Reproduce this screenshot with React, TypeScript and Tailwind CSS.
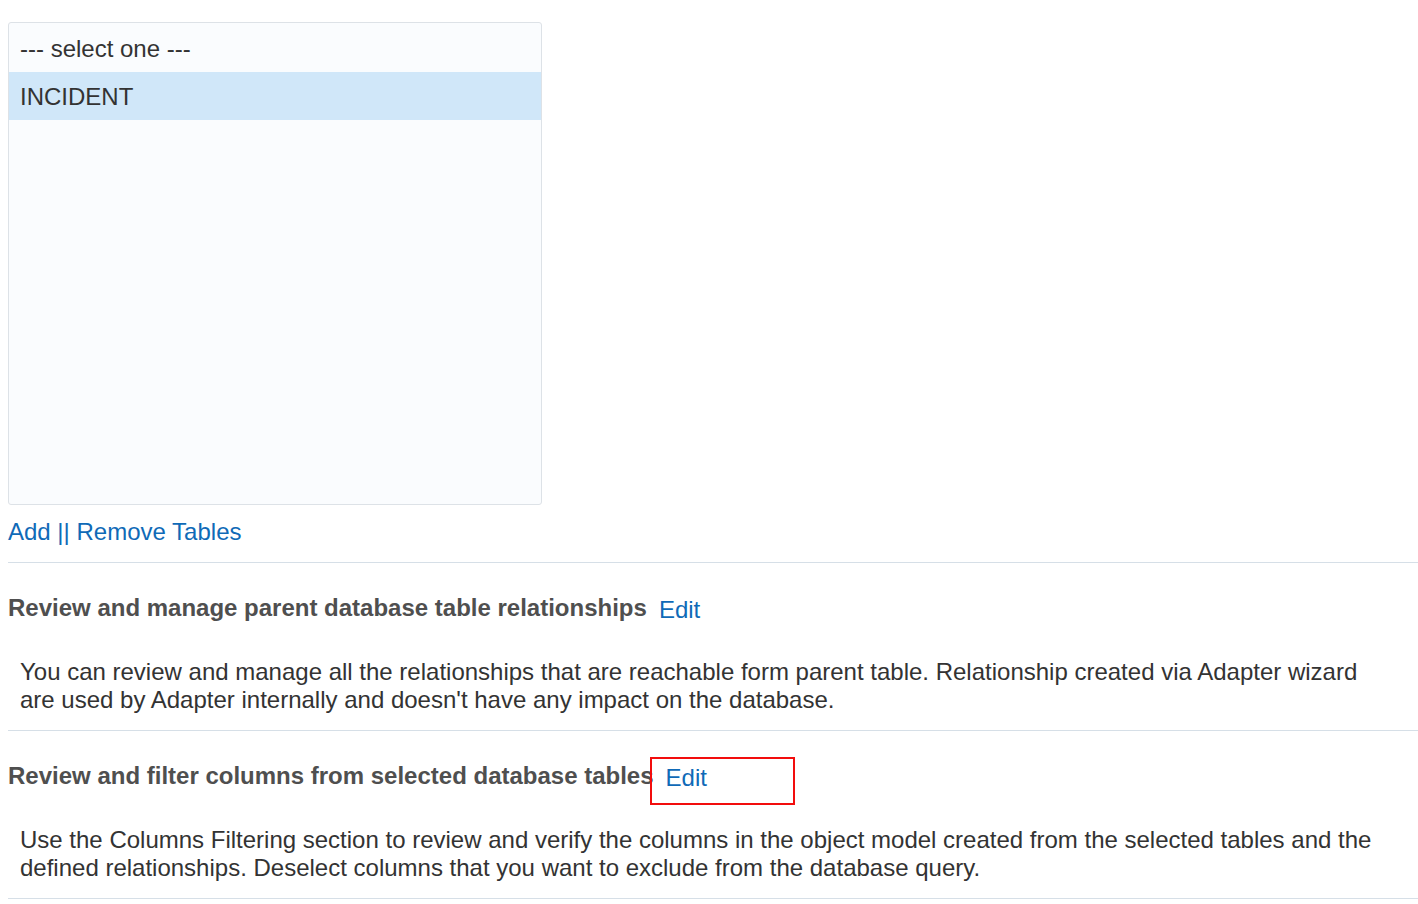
import React from 'react'

const font = { fontFamily: '"Liberation Sans", Arial, sans-serif' }

function Section({ title, children, highlight }: { title: string; children: React.ReactNode; highlight?: boolean }) {
  return (
    <div className="border-t border-[#d6dfe7]">
      <div className="mt-[31px] flex items-baseline text-[24px] leading-[28px]">
        <span className="font-bold text-[#4f4f4f]">{title}</span>
        <span className="relative top-[2px] ml-[12px] text-[24px] text-[#0f6ab7]">
          Edit
          {highlight && (
            <span className="pointer-events-none absolute left-[-16px] top-[-7px] h-[48px] w-[145px] border-2 border-[#f20d0d]" />
          )}
        </span>
      </div>
      <p className="mt-[36px] mb-[16px] pl-[12px] pr-[24px] text-[24px] leading-[28px] text-[#333]">{children}</p>
    </div>
  )
}

export default function App() {
  return (
    <div className="min-h-screen bg-white pl-[8px] pt-[22px]" style={font}>
      {/* Table list */}
      <div className="h-[483px] w-[534px] overflow-hidden rounded-[3px] border-[1.5px] border-[#dde2e7] bg-[#fafcfe]">
        <div className="flex h-[49px] items-center px-[11px] pt-[2px] text-[24px] text-[#333]">--- select one ---</div>
        <div className="flex h-[48px] items-center bg-[#d0e7f9] px-[11px] pt-[2px] text-[24px] text-[#333]">INCIDENT</div>
      </div>

      <div className="mt-[13px] mb-[16px] text-[24px] leading-[28px] text-[#0f6ab7]">
        <span>Add</span> || <span>Remove Tables</span>
      </div>

      <Section title="Review and manage parent database table relationships">
        You can review and manage all the relationships that are reachable form parent table. Relationship created via
        Adapter wizard are used by Adapter internally and doesn't have any impact on the database.
      </Section>

      <Section title="Review and filter columns from selected database tables" highlight>
        Use the Columns Filtering section to review and verify the columns in the object model created from the selected
        tables and the defined relationships. Deselect columns that you want to exclude from the database query.
      </Section>

      <div className="border-t border-[#d6dfe7]" />
    </div>
  )
}
